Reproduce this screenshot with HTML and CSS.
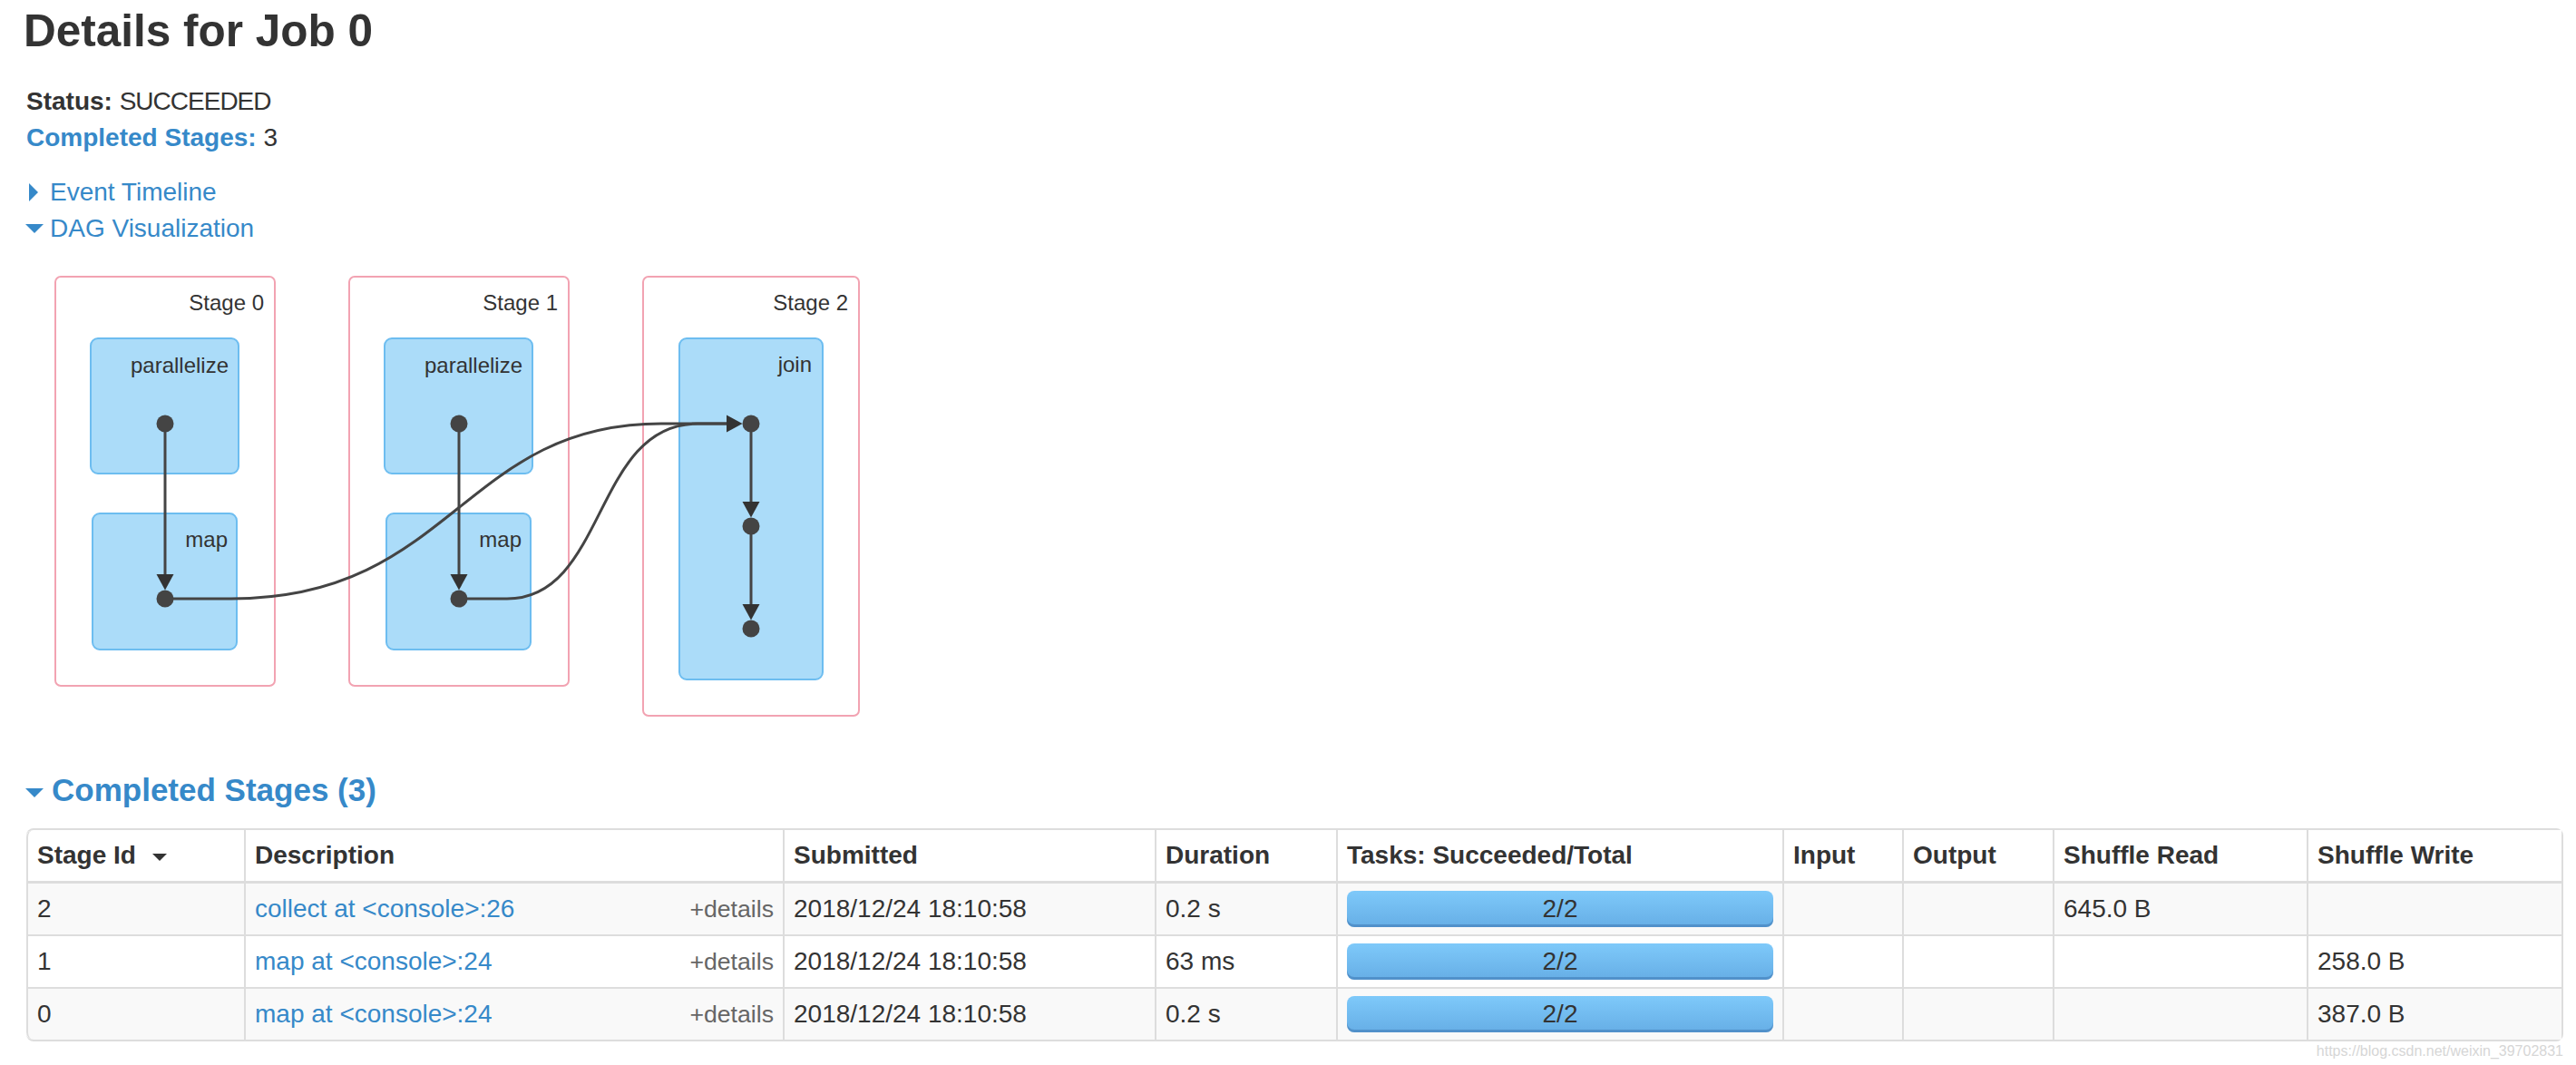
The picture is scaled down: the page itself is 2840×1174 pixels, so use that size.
FILE: index.html
```html
<!DOCTYPE html>
<html>
<head>
<meta charset="utf-8">
<title>Details for Job 0</title>
<link rel="stylesheet" href="styles.css">
</head>
<body>
<div class="page">
  <h3 class="title">Details for Job 0</h3>
  <ul class="summary">
    <li><strong>Status:</strong> <span class="status">SUCCEEDED</span></li>
    <li><a class="link strong" href="#completed">Completed Stages:</a> 3</li>
  </ul>
  <div class="toggles">
    <div class="toggle"><span class="arrow-closed"></span><a class="link">Event Timeline</a></div>
    <div class="toggle"><span class="arrow-open"></span><a class="link">DAG Visualization</a></div>
  </div>

  <svg class="dag" width="960" height="550" viewBox="0 0 960 550" xmlns="http://www.w3.org/2000/svg">
    <g class="stage">
      <rect x="32" y="25" width="242" height="451" rx="6"/>
      <rect x="356" y="25" width="242" height="451" rx="6"/>
      <rect x="680" y="25" width="238" height="484" rx="6"/>
    </g>
    <g class="stage-label">
      <text x="262" y="62">Stage 0</text>
      <text x="586" y="62">Stage 1</text>
      <text x="906" y="62">Stage 2</text>
    </g>
    <g class="rdd">
      <rect x="71" y="93" width="163" height="149" rx="8"/>
      <rect x="73" y="286" width="159" height="150" rx="8"/>
      <rect x="395" y="93" width="163" height="149" rx="8"/>
      <rect x="397" y="286" width="159" height="150" rx="8"/>
      <rect x="720" y="93" width="158" height="376" rx="8"/>
    </g>
    <g class="rdd-label">
      <text x="223" y="131">parallelize</text>
      <text x="222" y="323">map</text>
      <text x="547" y="131">parallelize</text>
      <text x="546" y="323">map</text>
      <text x="866" y="130">join</text>
    </g>
    <g class="edges">
      <path d="M153,187 L153,354"/>
      <path d="M477,187 L477,354"/>
      <path d="M799,187 L799,274"/>
      <path d="M799,300 L799,387"/>
      <path d="M153,380 L226,380 C470,380 480,187 700,187 L773,187"/>
      <path d="M477,380 L530,380 C640,380 625,187 740,187 L773,187"/>
    </g>
    <g class="heads">
      <polygon points="143.5,353 162.5,353 153,370.5"/>
      <polygon points="467.5,353 486.5,353 477,370.5"/>
      <polygon points="789.5,273 808.5,273 799,290.5"/>
      <polygon points="789.5,386 808.5,386 799,403.5"/>
      <polygon points="772,177.5 772,196.5 789.5,187"/>
    </g>
    <g class="dots">
      <circle cx="153" cy="187" r="9.5"/>
      <circle cx="153" cy="380" r="9.5"/>
      <circle cx="477" cy="187" r="9.5"/>
      <circle cx="477" cy="380" r="9.5"/>
      <circle cx="799" cy="187" r="9.5"/>
      <circle cx="799" cy="300" r="9.5"/>
      <circle cx="799" cy="413" r="9.5"/>
    </g>
  </svg>

  <h4 class="section" id="completed"><span class="arrow-open arrow-heading"></span>Completed Stages (3)</h4>

  <table class="stages">
    <thead>
      <tr>
        <th class="c-id">Stage Id<span class="sort"></span></th>
        <th class="c-desc">Description</th>
        <th class="c-sub">Submitted</th>
        <th class="c-dur">Duration</th>
        <th class="c-tasks">Tasks: Succeeded/Total</th>
        <th class="c-in">Input</th>
        <th class="c-out">Output</th>
        <th class="c-sr">Shuffle Read</th>
        <th class="c-sw">Shuffle Write</th>
      </tr>
    </thead>
    <tbody>
      <tr>
        <td>2</td>
        <td><span class="details">+details</span><a class="link">collect at &lt;console&gt;:26</a></td>
        <td>2018/12/24 18:10:58</td>
        <td>0.2 s</td>
        <td><div class="progress">2/2</div></td>
        <td></td>
        <td></td>
        <td>645.0 B</td>
        <td></td>
      </tr>
      <tr>
        <td>1</td>
        <td><span class="details">+details</span><a class="link">map at &lt;console&gt;:24</a></td>
        <td>2018/12/24 18:10:58</td>
        <td>63 ms</td>
        <td><div class="progress">2/2</div></td>
        <td></td>
        <td></td>
        <td></td>
        <td>258.0 B</td>
      </tr>
      <tr>
        <td>0</td>
        <td><span class="details">+details</span><a class="link">map at &lt;console&gt;:24</a></td>
        <td>2018/12/24 18:10:58</td>
        <td>0.2 s</td>
        <td><div class="progress">2/2</div></td>
        <td></td>
        <td></td>
        <td></td>
        <td>387.0 B</td>
      </tr>
    </tbody>
  </table>
  <div class="watermark">https://blog.csdn.net/weixin_39702831</div>
</div>
</body>
</html>
```

FILE: styles.css
```css
html, body {
  margin: 0;
  padding: 0;
  background: #ffffff;
}

body {
  font-family: "Liberation Sans", Arial, Helvetica, sans-serif;
  color: #333333;
  font-size: 28px;
  line-height: 40px;
}

.page {
  padding: 0 14px 0 29px;
}

.title {
  margin: 0 0 0 -3px;
  padding-top: 6px;
  font-size: 49.5px;
  line-height: 56px;
  font-weight: bold;
  color: #333333;
}

.summary {
  list-style: none;
  margin: 30px 0 0 0;
  padding: 0;
}

.summary li {
  height: 40px;
}

.status {
  letter-spacing: -1px;
}

.link {
  color: #3689c9;
  text-decoration: none;
}

.strong {
  font-weight: bold;
}

.toggles {
  margin-top: 20px;
}

.toggle {
  display: flex;
  align-items: center;
  height: 40px;
}

.arrow-closed {
  display: inline-block;
  width: 0;
  height: 0;
  border-top: 10px solid transparent;
  border-bottom: 10px solid transparent;
  border-left: 10px solid #3689c9;
  margin-left: 3px;
  margin-right: 13px;
}

.arrow-open {
  display: inline-block;
  width: 0;
  height: 0;
  border-left: 10px solid transparent;
  border-right: 10px solid transparent;
  border-top: 10px solid #3689c9;
  margin-left: -1px;
  margin-right: 7px;
}

.arrow-heading {
  margin-top: 6px;
  margin-right: 9px;
}

.dag {
  display: block;
  margin-top: 8px;
}

.dag .stage rect {
  fill: #ffffff;
  stroke: #f2a3b2;
  stroke-width: 2;
}

.dag .rdd rect {
  fill: #abdcf9;
  stroke: #6dbdf0;
  stroke-width: 2;
}

.dag text {
  font-family: "Liberation Sans", Arial, sans-serif;
  font-size: 24px;
  fill: #333333;
  text-anchor: end;
}

.dag .edges path {
  fill: none;
  stroke: #444444;
  stroke-width: 3;
}

.dag .heads polygon {
  fill: #333333;
}

.dag .dots circle {
  fill: #444444;
}

.section {
  display: flex;
  align-items: center;
  margin: 21px 0 0 0;
  height: 40px;
  font-size: 35px;
  line-height: 40px;
  font-weight: bold;
  color: #3689c9;
}

.stages {
  margin-top: 22px;
  width: 2797px;
  table-layout: fixed;
  border-collapse: separate;
  border-spacing: 0;
  border: 2px solid #dddddd;
  border-left: 0;
  border-radius: 8px;
  font-size: 28px;
  line-height: 40px;
}

.stages th,
.stages td {
  box-sizing: border-box;
  padding: 8px 10px;
  border-left: 2px solid #dddddd;
  border-top: 2px solid #dddddd;
  text-align: left;
  vertical-align: top;
  color: #333333;
  white-space: nowrap;
}

.stages thead th {
  border-top: 0;
  font-weight: bold;
  background: #ffffff;
}

.stages thead th:first-child {
  border-top-left-radius: 8px;
}

.stages tbody tr:first-child td {
  border-top-width: 3px;
}

.stages tbody tr:nth-child(odd) td {
  background: #f9f9f9;
}

.stages tbody tr:last-child td:first-child {
  border-bottom-left-radius: 8px;
}

.c-id { width: 240px; }
.c-desc { width: 594px; }
.c-sub { width: 410px; }
.c-dur { width: 200px; }
.c-tasks { width: 492px; }
.c-in { width: 132px; }
.c-out { width: 166px; }
.c-sr { width: 280px; }
.c-sw { width: 281px; }

.sort {
  display: inline-block;
  width: 0;
  height: 0;
  border-left: 8px solid transparent;
  border-right: 8px solid transparent;
  border-top: 8px solid #333333;
  margin-left: 18px;
  vertical-align: middle;
}

.details {
  float: right;
  font-size: 26.67px;
  color: #666666;
}

.progress {
  height: 40px;
  border-radius: 8px;
  background: linear-gradient(to bottom, #7ec9fa 0%, #66aee6 100%);
  box-shadow: inset 0 -3px 0 rgba(40, 90, 150, 0.35);
  text-align: center;
  line-height: 40px;
  color: #333333;
}

.watermark {
  margin-top: 1px;
  text-align: right;
  font-size: 16px;
  line-height: 20px;
  color: #d6d6d6;
}
```
